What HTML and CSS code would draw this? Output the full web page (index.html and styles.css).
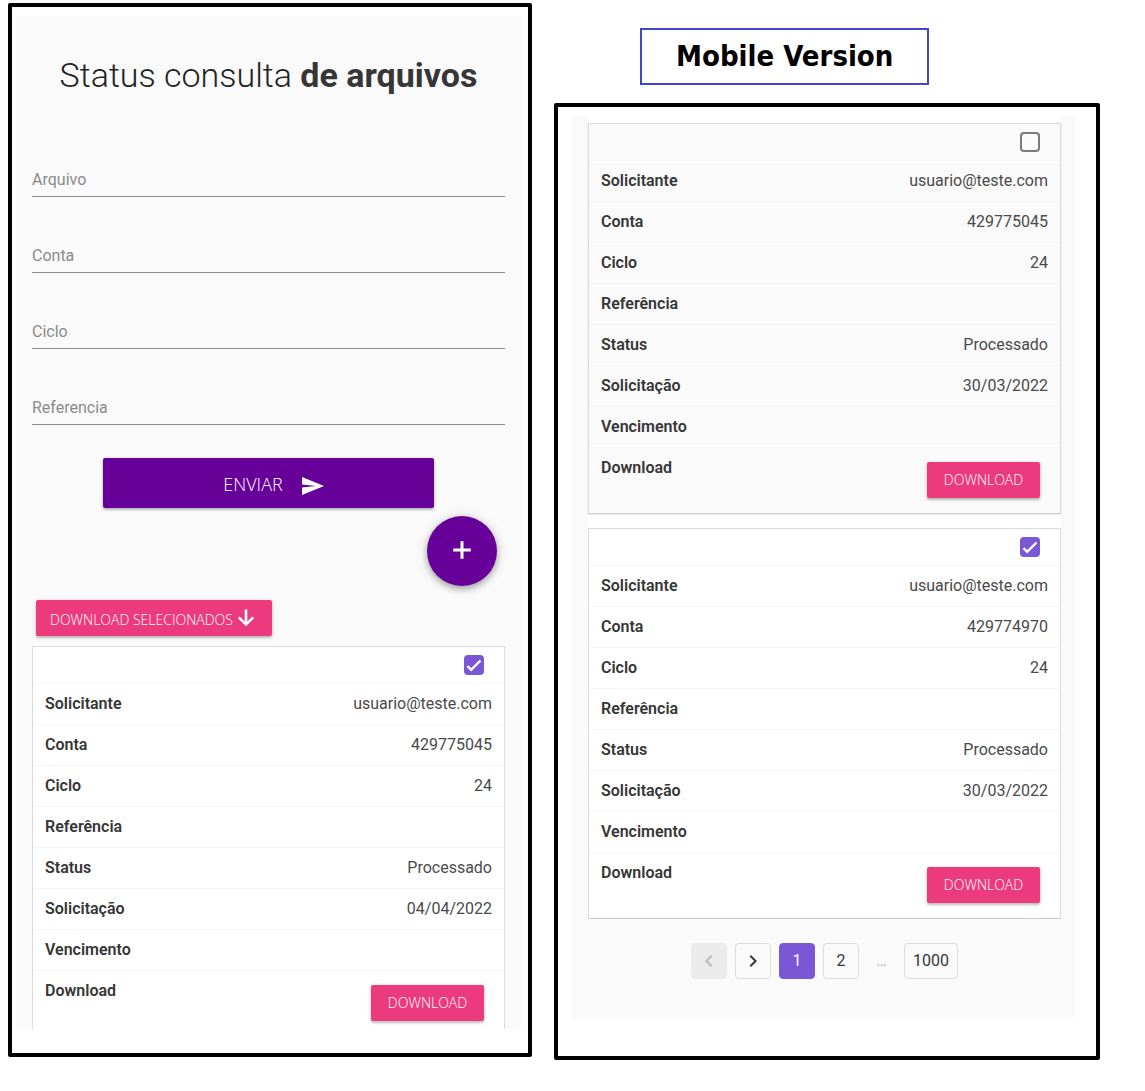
FILE: index.html
```html
<!DOCTYPE html>
<html lang="pt-BR">
<head>
<meta charset="utf-8">
<meta name="viewport" content="width=device-width, initial-scale=1">
<title>Status consulta de arquivos</title>
<link rel="stylesheet" href="styles.css">
</head>
<body>
<main class="board">
  <section class="frame frame-form">
    <div class="panel panel-form">
      <h1 class="title">Status consulta <strong>de arquivos</strong></h1>
      <form class="form">
        <div class="field"><input id="arquivo" type="text"><label for="arquivo">Arquivo</label></div>
        <div class="field"><input id="conta" type="text"><label for="conta">Conta</label></div>
        <div class="field"><input id="ciclo" type="text"><label for="ciclo">Ciclo</label></div>
        <div class="field"><input id="referencia" type="text"><label for="referencia">Referencia</label></div>
        <button class="btn btn-send" type="button"><span>ENVIAR</span>
          <svg class="icon" viewBox="0 0 24 24" aria-hidden="true"><path d="M2 21l22-9L2 3v7.500l14 1.500-14 1.500z"/></svg>
        </button>
      </form>
      <button class="btn-add" type="button" aria-label="Adicionar">
        <svg viewBox="0 0 24 24" aria-hidden="true"><path d="M19 13.200h-5.800v5.800h-2.400v-5.800H5v-2.400h5.800V5h2.400v5.800H19z"/></svg>
      </button>
      <button class="btn btn-pink btn-selected" type="button"><span>DOWNLOAD SELECIONADOS</span>
        <svg class="icon" viewBox="0 0 24 24" aria-hidden="true"><path d="M10.700 3.500h2.600v12l5-5 1.800 1.800L12 20.300l-8.100-8 1.800-1.800 5 5z"/></svg>
      </button>
      <table class="card card-open">
        <tbody>
          <tr class="pick"><td colspan="2"><input type="checkbox" aria-label="Selecionar arquivo" checked></td></tr>
          <tr><th scope="row">Solicitante</th><td>usuario@teste.com</td></tr>
          <tr><th scope="row">Conta</th><td>429775045</td></tr>
          <tr><th scope="row">Ciclo</th><td>24</td></tr>
          <tr><th scope="row">Referência</th><td></td></tr>
          <tr><th scope="row">Status</th><td>Processado</td></tr>
          <tr><th scope="row">Solicitação</th><td>04/04/2022</td></tr>
          <tr><th scope="row">Vencimento</th><td></td></tr>
          <tr class="action"><th scope="row">Download</th><td><button class="btn btn-pink" type="button">DOWNLOAD</button></td></tr>
        </tbody>
      </table>
    </div>
  </section>

  <div class="side">
    <h2 class="badge">Mobile Version</h2>
    <section class="frame frame-list">
      <div class="panel panel-list">
        <div class="cards">
          <table class="card card-plain">
            <tbody>
              <tr class="pick"><td colspan="2"><input type="checkbox" aria-label="Selecionar arquivo"></td></tr>
              <tr><th scope="row">Solicitante</th><td>usuario@teste.com</td></tr>
              <tr><th scope="row">Conta</th><td>429775045</td></tr>
              <tr><th scope="row">Ciclo</th><td>24</td></tr>
              <tr><th scope="row">Referência</th><td></td></tr>
              <tr><th scope="row">Status</th><td>Processado</td></tr>
              <tr><th scope="row">Solicitação</th><td>30/03/2022</td></tr>
              <tr><th scope="row">Vencimento</th><td></td></tr>
              <tr class="action"><th scope="row">Download</th><td><button class="btn btn-pink" type="button">DOWNLOAD</button></td></tr>
            </tbody>
          </table>
          <table class="card">
            <tbody>
              <tr class="pick"><td colspan="2"><input type="checkbox" aria-label="Selecionar arquivo" checked></td></tr>
              <tr><th scope="row">Solicitante</th><td>usuario@teste.com</td></tr>
              <tr><th scope="row">Conta</th><td>429774970</td></tr>
              <tr><th scope="row">Ciclo</th><td>24</td></tr>
              <tr><th scope="row">Referência</th><td></td></tr>
              <tr><th scope="row">Status</th><td>Processado</td></tr>
              <tr><th scope="row">Solicitação</th><td>30/03/2022</td></tr>
              <tr><th scope="row">Vencimento</th><td></td></tr>
              <tr class="action"><th scope="row">Download</th><td><button class="btn btn-pink" type="button">DOWNLOAD</button></td></tr>
            </tbody>
          </table>
        </div>
        <nav class="pagination" aria-label="Paginação">
          <button class="page step" type="button" aria-label="Anterior" disabled><svg class="icon" viewBox="0 0 24 24" aria-hidden="true"><path d="M15.41 16.58L10.83 12l4.58-4.59L14 6l-6 6 6 6z"/></svg></button>
          <button class="page step" type="button" aria-label="Próxima"><svg class="icon" viewBox="0 0 24 24" aria-hidden="true"><path d="M8.59 16.58L13.17 12 8.59 7.41 10 6l6 6-6 6z"/></svg></button>
          <a class="page current" href="#1" aria-current="page">1</a>
          <a class="page" href="#2">2</a>
          <span class="ellipsis">…</span>
          <a class="page" href="#1000">1000</a>
        </nav>
      </div>
    </section>
  </div>
</main>
</body>
</html>
```
FILE: styles.css
```css
*,
*::before,
*::after {
  box-sizing: border-box;
}

body {
  margin: 0;
  background: #fff;
  color: #4a4a4a;
  font: 400 16px/24px Roboto, sans-serif;
}

.board {
  display: grid;
  grid-template-columns: 524fr 546fr;
  align-items: start;
  gap: 22px;
  padding: 3px 45px 31px 8px;
}

.frame {
  border: 4px solid #000;
  border-radius: 2px;
}

.frame-form {
  padding: 9px 7px 24px 4px;
}

.frame-list {
  padding: 9px 21px 37px 14px;
}

.panel {
  background: #fafafa;
}

.panel-form {
  display: flex;
  flex-direction: column;
  padding: 36px 16px 0;
}

.panel-list {
  padding: 0 14px 40px 16px;
}

.title {
  margin: 0 0 58px;
  color: #222;
  font-size: 34px;
  font-weight: 300;
  line-height: 46px;
  text-align: center;
}

.title strong {
  color: #363636;
  font-weight: 700;
}

.form {
  display: flex;
  flex-direction: column;
}

.field {
  display: grid;
  height: 41px;
  margin-bottom: 35px;
}

.field input,
.field label {
  grid-area: 1 / 1;
}

.field input {
  width: 100%;
  padding: 0;
  border: 0;
  border-bottom: 1px solid #8e8e8e;
  background: transparent;
  font: inherit;
  outline: 0;
}

.field label {
  align-self: end;
  justify-self: start;
  padding-bottom: 5px;
  color: #8a8a8a;
}

.btn {
  display: inline-flex;
  align-items: center;
  justify-content: center;
  height: 36px;
  padding: 0 16px;
  border: 0;
  border-radius: 2px;
  color: #fff;
  font: 300 14px/20px "Open Sans", sans-serif;
  box-shadow: 0 2px 2px rgba(0, 0, 0, 0.14), 0 1px 4px rgba(0, 0, 0, 0.2);
}

.icon {
  width: 24px;
  height: 24px;
  fill: currentColor;
}

.btn-send {
  gap: 17px;
  align-self: center;
  width: 70%;
  height: 50px;
  margin-top: -2px;
  padding: 6px 0 0 10px;
  background: #609;
  font-size: 18px;
}

.btn-send span {
  padding-bottom: 4px;
}

.btn-add {
  display: grid;
  place-items: center;
  align-self: flex-end;
  width: 70px;
  height: 70px;
  margin: 8px 8px 14px;
  padding: 0 0 2px;
  border: 0;
  border-radius: 50%;
  background: #609;
  box-shadow: 0 3px 6px rgba(0, 0, 0, 0.3), 0 1px 14px rgba(0, 0, 0, 0.12);
}

.btn-add svg {
  width: 30px;
  height: 30px;
  fill: #fff;
}

.btn-pink {
  min-width: 113px;
  background: #ec3b7c;
}

.btn-selected {
  gap: 1px;
  align-self: flex-start;
  margin: 0 4px 10px;
  padding: 0 14px;
}

.btn-selected span {
  padding-top: 4px;
}

.cards {
  display: grid;
  gap: 14px;
  padding-top: 7px;
  background: #fff;
}

.card {
  display: block;
  border: 1px solid #dbdbdb;
  border-bottom-color: #ccc;
  background: #fff;
}

.card-plain {
  background: #fafafa;
  box-shadow: 0 1px 2px rgba(10, 10, 10, 0.1);
}

.card-open {
  border-bottom: 0;
}

.card tbody {
  display: block;
}

.card tr {
  display: flex;
  justify-content: space-between;
  min-height: 41px;
  padding: 8px 12px;
  border-bottom: 1px solid #f5f5f5;
}

.card th,
.card td {
  padding: 0;
}

.card th {
  color: #363636;
  font-weight: 600;
  text-align: left;
}

.card td {
  text-align: right;
}

.card .pick {
  justify-content: flex-end;
  min-height: 37px;
}

.card .pick td {
  display: flex;
  padding-right: 8px;
}

.card .action {
  border-bottom: 0;
}

.card .action td {
  display: flex;
  padding: 6px 8px 7px;
}

.card-open .action td {
  padding-bottom: 0;
}

.pick input {
  width: 20px;
  height: 20px;
  margin: 0;
  border: 2px solid #7a7a7a;
  border-radius: 4px;
  appearance: none;
}

.pick input:checked {
  border-color: #7957d5;
  background: #7957d5 url("data:image/svg+xml,%3Csvg xmlns='http://www.w3.org/2000/svg' viewBox='0 0 1 1'%3E%3Cpath fill='%23fff' d='M.04.627L.146.521.429.804.323.91zM.217.804L.854.167.96.273.323.91z'/%3E%3C/svg%3E") center / 16px no-repeat;
}

.pagination {
  display: flex;
  justify-content: center;
  gap: 8px;
  margin-top: 24px;
}

.page {
  display: flex;
  align-items: center;
  justify-content: center;
  min-width: 36px;
  height: 36px;
  padding: 0 8px;
  border: 1px solid #dbdbdb;
  border-radius: 4px;
  background: transparent;
  color: #363636;
  font: inherit;
  text-decoration: none;
}

.page.step {
  padding: 0;
}

.page:disabled {
  border-color: #ebebeb;
  background: #ebebeb;
  color: #b8b8b8;
}

.page.current {
  border-color: #7957d5;
  background: #7957d5;
  color: #fff;
}

.ellipsis {
  width: 29px;
  color: #b5b5b5;
  line-height: 36px;
  text-align: center;
}

.badge {
  width: fit-content;
  margin: 25px 0 18px 86px;
  padding: 10px 34px 11px;
  border: 2px solid #3f48cc;
  color: #000;
  font: 700 29px/32px "DejaVu Sans Condensed", "DejaVu Sans", sans-serif;
}
```
